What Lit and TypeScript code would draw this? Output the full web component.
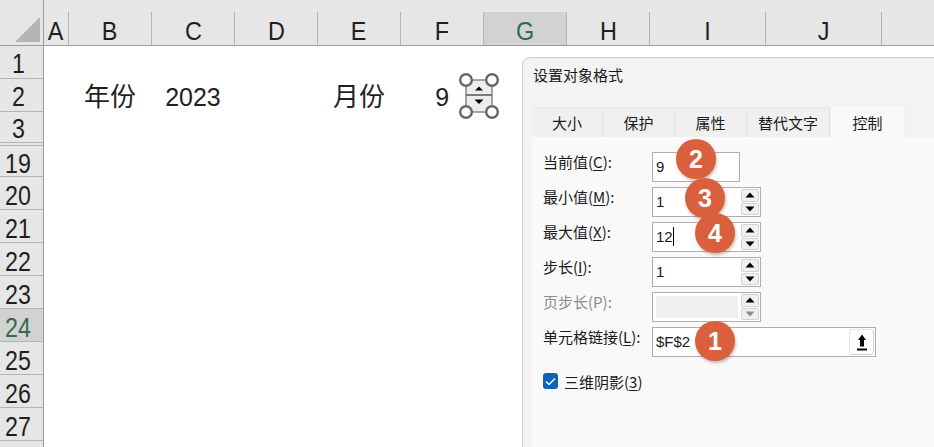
import { LitElement, html, css, svg } from "lit";
import { customElement } from "lit/decorators.js";

const COLS: [string, number][] = [
  ["A", 25], ["B", 83], ["C", 83], ["D", 83], ["E", 83], ["F", 83], ["G", 83],
  ["H", 83], ["I", 116], ["J", 116], ["", 60],
];
const ROWS: [string, number][] = [
  ["1", 33], ["2", 33], ["3", 31], ["", 3], ["19", 31], ["20", 33], ["21", 33], ["22", 33],
  ["23", 33], ["24", 33], ["25", 33], ["26", 33], ["27", 33], ["", 10],
];

@customElement("app-root")
export class AppRoot extends LitElement {
  static styles = css`
    :host { display: block; }
    .page { position: relative; width: 934px; height: 447px; overflow: hidden; background: #fff;
      font-family: "Liberation Sans", "Noto Sans CJK SC", sans-serif; color: #1f1f1f; }
    .top { display: flex; height: 46px; background: #e6e6e6; border-bottom: 1px solid #9d9d9d; box-sizing: border-box; }
    .corner { width: 44px; flex: none; box-sizing: border-box; border-right: 1px solid #9d9d9d; display: flex; }
    .corner svg { display: block; }
    .col { flex: none; box-sizing: border-box; height: 33px; margin-top: 12px; font-size: 26px; line-height: 38px;
      text-align: center; border-right: 1px solid #b4b4b4; font-weight: 400; }
    .col span { display: inline-block; transform: scaleX(.9); }
    .col.sel { background: #d2d2d2; color: #2f6b4f; }
    .body { display: flex; }
    .heads { width: 44px; flex: none; box-sizing: border-box; background: #e6e6e6; border-right: 1px solid #9d9d9d; height: 401px; overflow: hidden; }
    .row { box-sizing: border-box; font-size: 27px; border-bottom: 1px solid #b4b4b4; display: flex; align-items: center;
      justify-content: center; padding: 6px 6px 0 0; line-height: 22px; }
    .row.upper { padding-top: 4px; }
    .row.gap { padding: 0; overflow: hidden; }
    .row span { display: inline-block; transform: scaleX(.86); }
    .row.sel { background: #d2d2d2; color: #2f6b4f; }
    .cells { display: flex; padding-top: 33px; font-size: 26px; height: 33px; line-height: 36px; }
    .cell { flex: none; text-align: center; }
    .cell.cjk { padding-right: 1px; box-sizing: border-box; }
    .cell.num span { display: inline-block; transform: scaleX(.96); }
    .cell.shift { padding-right: 2px; box-sizing: border-box; }
    .spinner { position: absolute; left: 458px; top: 72px; }
    .dialog { position: absolute; left: 522px; top: 57px; width: 440px; height: 420px; box-sizing: border-box;
      background: #f3f3f3; border: 1px solid #cacaca; border-radius: 8px 0 0 0; color: #1a1a1a;
      font-family: "Noto Sans CJK SC", "Liberation Sans", sans-serif; }
    .title { height: 37px; padding: 7px 0 0 10px; box-sizing: border-box; font-size: 15px; line-height: 20px; }
    .tabs { display: flex; margin: 12px 0 0 9px; height: 30px; font-size: 15px; }
    .tab { box-sizing: border-box; text-align: center; line-height: 29px; background: #f0f0f0;
      border-top: 1px solid #e8e8e8; border-right: 1px solid #e4e4e4; }
    .tab.on { background: #f9f9f9; margin-top: -2px; height: 32px; line-height: 33px; border: 1px solid #f1f1f1; border-bottom: 0; }
    .panel { margin-left: 9px; height: 320px; background: #f9f9f9; padding: 15px 0 0 11px; box-sizing: border-box;
      display: flex; flex-direction: column; gap: 5px; font-size: 15px; }
    .frow { display: flex; height: 30px; }
    .flabel { width: 109px; flex: none; line-height: 20px; }
    .flabel.off { color: #8b8b8b; }
    u { text-underline-offset: 2px; }
    .box { position: relative; box-sizing: border-box; height: 30px; background: #fff; border: 1px solid #aeaeae; display: flex;
      font-family: "Liberation Sans", sans-serif; font-size: 15px; line-height: 27px; padding-left: 3px; }
    .w88 { width: 88px; }
    .w109 { width: 109px; }
    .w224 { width: 224px; }
    .val { flex: 1; min-width: 0; }
    .caret { display: inline-block; width: 1px; height: 19px; background: #000; vertical-align: -4px; }
    .fill { flex: 1; background: #f0f0f0; margin: 3px 3px 3px 0; }
    .spin { width: 18px; flex: none; display: flex; flex-direction: column; gap: 1px; padding: 1px 1px 1px 0; }
    .sb { flex: 1; box-sizing: border-box; background: #f0f0f0; border: 1px solid #d3d3d3; border-radius: 2px; display: flex; align-items: center; justify-content: center; }
    .pick { position: absolute; right: 1px; top: 1px; width: 25px; height: 26px; box-sizing: border-box; background: #fff;
      border: 1px solid #e4e4e4; border-right-color: #cfcfcf; border-bottom-color: #cfcfcf; border-radius: 4px;
      display: flex; align-items: center; justify-content: center; }
    .check { display: flex; align-items: center; gap: 6px; margin-top: 9px; height: 20px; font-size: 15px; }
    .tick { width: 15px; height: 16px; background: #0f62b8; border-radius: 3px; display: flex; align-items: center; justify-content: center; }
    .badge { position: absolute; width: 40px; height: 40px; border-radius: 50%; background: #d95f3d; color: #fff;
      font: bold 25px/40px "Liberation Sans", sans-serif; text-align: center; box-shadow: 1px 2px 3px rgba(120,60,40,.35); }
    .b1 { left: 695px; top: 321px; }
    .b2 { left: 676px; top: 139px; }
    .b3 { left: 685px; top: 178px; }
    .b4 { left: 695px; top: 213px; }
  `;

  private arrow(up: boolean, off = false) {
    const c = off ? "#8c8c8c" : "#000";
    return html`<svg width="10" height="6" viewBox="0 0 10 6">
      <path d=${up ? "M5 0.5 9.5 5.5H0.5Z" : "M0.5 0.5H9.5L5 5.5Z"} fill=${c}></path></svg>`;
  }

  private spin(off = false) {
    return html`<div class="spin">
      <div class="sb">${this.arrow(true)}</div>
      <div class="sb">${this.arrow(false, off)}</div>
    </div>`;
  }

  private spinner() {
    const handles = [[8, 8], [34, 8], [8, 40], [34, 40]];
    return svg`<svg class="spinner" width="44" height="50" viewBox="0 0 44 50">
      <rect x="8" y="8" width="26" height="32" fill="#ededed" stroke="#6b6b6b" stroke-width="1.2"></rect>
      <line x1="8" y1="23" x2="34" y2="23" stroke="#555" stroke-width="1.5"></line>
      <path d="M17 18.5 21 14.5 25 18.5Z" fill="#000"></path>
      <path d="M16.5 27.5H25.5L21 32Z" fill="#000"></path>
      ${handles.map(([x, y]) => svg`<circle cx=${x} cy=${y} r="5.8" fill="#fff" stroke="#666" stroke-width="2.4"></circle>`)}
    </svg>`;
  }

  render() {
    return html`<div class="page">
      <div class="top">
        <div class="corner"><svg width="43" height="45" viewBox="0 0 43 45"><path d="M15 42 40 17V42Z" fill="#b5b5b5"></path></svg></div>
        ${COLS.map(([n, cw]) => html`<div class="col ${n === "G" ? "sel" : ""}" style="width:${cw}px"><span>${n}</span></div>`)}
      </div>
      <div class="body">
        <div class="heads">
          ${ROWS.map(([n, h]) => html`<div class="row ${n === "24" ? "sel" : ""} ${["1", "2", "3"].includes(n) ? "upper" : ""} ${h === 3 ? "gap" : ""}" style="height:${h}px"><span>${n}</span></div>`)}
        </div>
        <div class="cells">
          ${COLS.map(([n, cw]) => {
            const t = ({ B: "年份", C: "2023", E: "月份", F: "9" } as Record<string, string>)[n] ?? "";
            const cls = n === "C" ? "num shift" : n === "F" ? "num" : t ? "cjk" : "";
            return html`<div class="cell ${cls}" style="width:${cw}px"><span>${t}</span></div>`;
          })}
        </div>
      </div>
      ${this.spinner()}
      <div class="dialog">
        <div class="title">设置对象格式</div>
        <div class="tabs">
          <div class="tab" style="width:71px">大小</div>
          <div class="tab" style="width:72px">保护</div>
          <div class="tab" style="width:72px">属性</div>
          <div class="tab" style="width:83px">替代文字</div>
          <div class="tab on" style="width:75px">控制</div>
        </div>
        <div class="panel">
          <div class="frow"><div class="flabel">当前值(<u>C</u>):</div><div class="box w88"><span class="val">9</span></div></div>
          <div class="frow"><div class="flabel">最小值(<u>M</u>):</div><div class="box w109"><span class="val">1</span>${this.spin()}</div></div>
          <div class="frow"><div class="flabel">最大值(<u>X</u>):</div><div class="box w109"><span class="val">12<span class="caret"></span></span>${this.spin()}</div></div>
          <div class="frow"><div class="flabel">步长(<u>I</u>):</div><div class="box w109"><span class="val">1</span>${this.spin()}</div></div>
          <div class="frow"><div class="flabel off">页步长(P):</div><div class="box w109"><div class="fill"></div>${this.spin(true)}</div></div>
          <div class="frow"><div class="flabel">单元格链接(<u>L</u>):</div><div class="box w224"><span class="val">$F$2</span>
            <div class="pick"><svg width="12" height="17" viewBox="0 0 12 17"><path d="M6 0.5 10 6H8V12.5H4V6H2Z" fill="#000"></path><rect x="1" y="14.5" width="10" height="2" fill="#000"></rect></svg></div>
          </div></div>
          <div class="check"><div class="tick"><svg width="11" height="9" viewBox="0 0 11 9"><path d="M1 4.5 4 7.5 10 1.5" fill="none" stroke="#fff" stroke-width="1.4"></path></svg></div><span>三维阴影(<u>3</u>)</span></div>
        </div>
      </div>
      <div class="badge b1">1</div>
      <div class="badge b2">2</div>
      <div class="badge b3">3</div>
      <div class="badge b4">4</div>
    </div>`;
  }
}
